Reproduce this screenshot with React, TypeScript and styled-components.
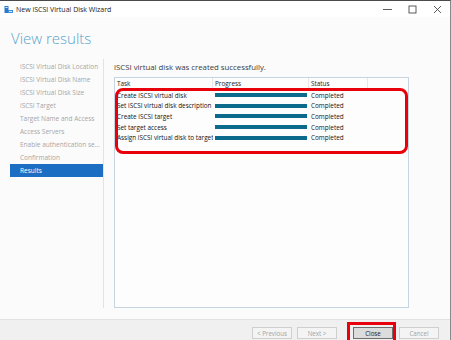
import styled, { createGlobalStyle } from 'styled-components'

const GlobalStyle = createGlobalStyle`
  html, body {
    margin: 0;
    padding: 0;
    background: #ffffff;
  }
  body {
    font-family: "Open Sans", "Noto Sans", sans-serif;
  }
`

const Window = styled.div`
  width: 451px;
  height: 340px;
  box-sizing: border-box;
  border-top: 1px solid #4a4a4a;
  border-right: 1px solid #8a8a8a;
  background: #fbfbfb;
  display: flex;
  flex-direction: column;
  overflow: hidden;
`

const TitleBar = styled.div`
  height: 16px;
  background: #ffffff;
  display: flex;
  align-items: center;
  padding-left: 4px;
  gap: 3px;
`

const Title = styled.div`
  font-size: 7px;
  color: #1a1a1a;
  flex: 1;
  line-height: 1;
`

const Controls = styled.div`
  display: flex;
  align-items: center;
`

const ControlBtn = styled.div`
  width: 25px;
  height: 16px;
  display: flex;
  align-items: center;
  justify-content: center;
`

const Heading = styled.div`
  height: 42px;
  display: flex;
  align-items: center;
  padding-left: 11px;
  font-size: 15px;
  color: #5aa3cc;
  font-weight: 300;
`

const Main = styled.div`
  flex: 1;
  display: flex;
  padding-bottom: 11px;
`

const Nav = styled.div`
  width: 104px;
  border-right: 1px solid #e3e3e3;
  padding-top: 1px;
  padding-left: 10px;
  box-sizing: border-box;
  display: flex;
  flex-direction: column;
`

const NavItem = styled.div<{ active?: boolean }>`
  height: 13px;
  line-height: 13px;
  font-size: 6.5px;
  padding-left: 10px;
  padding-right: 1px;
  white-space: nowrap;
  overflow: hidden;
  text-overflow: ellipsis;
  color: ${p => (p.active ? '#ffffff' : '#a6a6a6')};
  background: ${p => (p.active ? '#1b6ec2' : 'transparent')};
`

const Content = styled.div`
  flex: 1;
  padding-left: 10px;
  display: flex;
  flex-direction: column;
`

const Message = styled.div`
  font-size: 7.8px;
  color: #3a3a3a;
  height: 18px;
  line-height: 16px;
`

const Table = styled.div`
  position: relative;
  width: 295px;
  flex: 1;
  box-sizing: border-box;
  border: 1px solid #c7d5e2;
  background: #fdfdfd;
`

const Row = styled.div<{ header?: boolean }>`
  display: grid;
  grid-template-columns: 98px 96px 59px 1fr;
  height: ${p => (p.header ? '12px' : '10.6px')};
  align-items: center;
  font-size: 6.4px;
  color: #111;
  white-space: nowrap;
`

const HeadCell = styled.div`
  height: 12px;
  line-height: 12px;
  padding-left: 2px;
  border-right: 1px solid #e6e6e6;
  color: #222;
`

const Cell = styled.div`
  padding-left: 2px;
  overflow: hidden;
`

const Bar = styled.div`
  height: 4px;
  width: 92px;
  background: #0c6b8c;
`

const Annotation = styled.div`
  position: absolute;
  left: 0;
  top: 10px;
  width: 293px;
  height: 66px;
  box-sizing: border-box;
  border: 3px solid #e8000b;
  border-radius: 8px;
  pointer-events: none;
`

const Footer = styled.div`
  height: 20px;
  background: #f0f0f0;
  border-top: 1px solid #e2e2e2;
  display: flex;
  align-items: flex-end;
  justify-content: flex-end;
  padding-right: 11px;
  gap: 5px;
`

const Button = styled.div<{ primary?: boolean }>`
  width: 40px;
  height: 12px;
  margin-bottom: 1px;
  box-sizing: border-box;
  border: 1px solid ${p => (p.primary ? '#6e6e6e' : '#cfcfcf')};
  background: ${p => (p.primary ? '#dcdcdc' : '#f4f4f4')};
  color: ${p => (p.primary ? '#1a1a1a' : '#a3a3a3')};
  font-size: 6.2px;
  display: flex;
  align-items: center;
  justify-content: center;
`

const RedBox = styled.div`
  border: 3px solid #e8000b;
  border-bottom: none;
  padding: 2px 0 0 3px;
  margin-left: 5px;
  margin-right: -2px;
  display: flex;
  align-items: flex-end;
`

const navItems = [
  'iSCSI Virtual Disk Location',
  'iSCSI Virtual Disk Name',
  'iSCSI Virtual Disk Size',
  'iSCSI Target',
  'Target Name and Access',
  'Access Servers',
  'Enable authentication service',
  'Confirmation',
  'Results',
]

const tasks = [
  'Create iSCSI virtual disk',
  'Set iSCSI virtual disk description',
  'Create iSCSI target',
  'Set target access',
  'Assign iSCSI virtual disk to target',
]

const AppIcon = () => (
  <svg width="9" height="9" viewBox="0 0 9 9">
    <rect x="0.5" y="1" width="4" height="7" fill="#2a78c8" />
    <rect x="1.3" y="2" width="2.4" height="1" fill="#cfe4f7" />
    <rect x="4" y="5" width="5" height="3" fill="#3d8fd8" />
    <rect x="5" y="6" width="3" height="1" fill="#d9ebfa" />
  </svg>
)

const App = () => {
  return (
    <>
      <GlobalStyle />
      <Window>
        <TitleBar>
          <AppIcon />
          <Title>New iSCSI Virtual Disk Wizard</Title>
          <Controls>
            <ControlBtn>
              <svg width="9" height="9" viewBox="0 0 9 9">
                <line x1="0" y1="4.5" x2="9" y2="4.5" stroke="#333" strokeWidth="0.8" />
              </svg>
            </ControlBtn>
            <ControlBtn>
              <svg width="9" height="9" viewBox="0 0 9 9">
                <rect x="1" y="1" width="7" height="7" fill="none" stroke="#333" strokeWidth="0.8" />
              </svg>
            </ControlBtn>
            <ControlBtn>
              <svg width="9" height="9" viewBox="0 0 9 9">
                <path d="M1 1 L8 8 M8 1 L1 8" stroke="#333" strokeWidth="0.8" />
              </svg>
            </ControlBtn>
          </Controls>
        </TitleBar>
        <Heading>View results</Heading>
        <Main>
          <Nav>
            {navItems.map(item => (
              <NavItem key={item} active={item === 'Results'}>{item}</NavItem>
            ))}
          </Nav>
          <Content>
            <Message>iSCSI virtual disk was created successfully.</Message>
            <Table>
              <Row header>
                <HeadCell>Task</HeadCell>
                <HeadCell>Progress</HeadCell>
                <HeadCell>Status</HeadCell>
                <div />
              </Row>
              {tasks.map(task => (
                <Row key={task}>
                  <Cell>{task}</Cell>
                  <Cell><Bar /></Cell>
                  <Cell>Completed</Cell>
                  <div />
                </Row>
              ))}
              <Annotation />
            </Table>
          </Content>
        </Main>
        <Footer>
          <Button>&lt; Previous</Button>
          <Button>Next &gt;</Button>
          <RedBox>
            <Button primary>Close</Button>
          </RedBox>
          <Button>Cancel</Button>
        </Footer>
      </Window>
    </>
  )
}

export default App
